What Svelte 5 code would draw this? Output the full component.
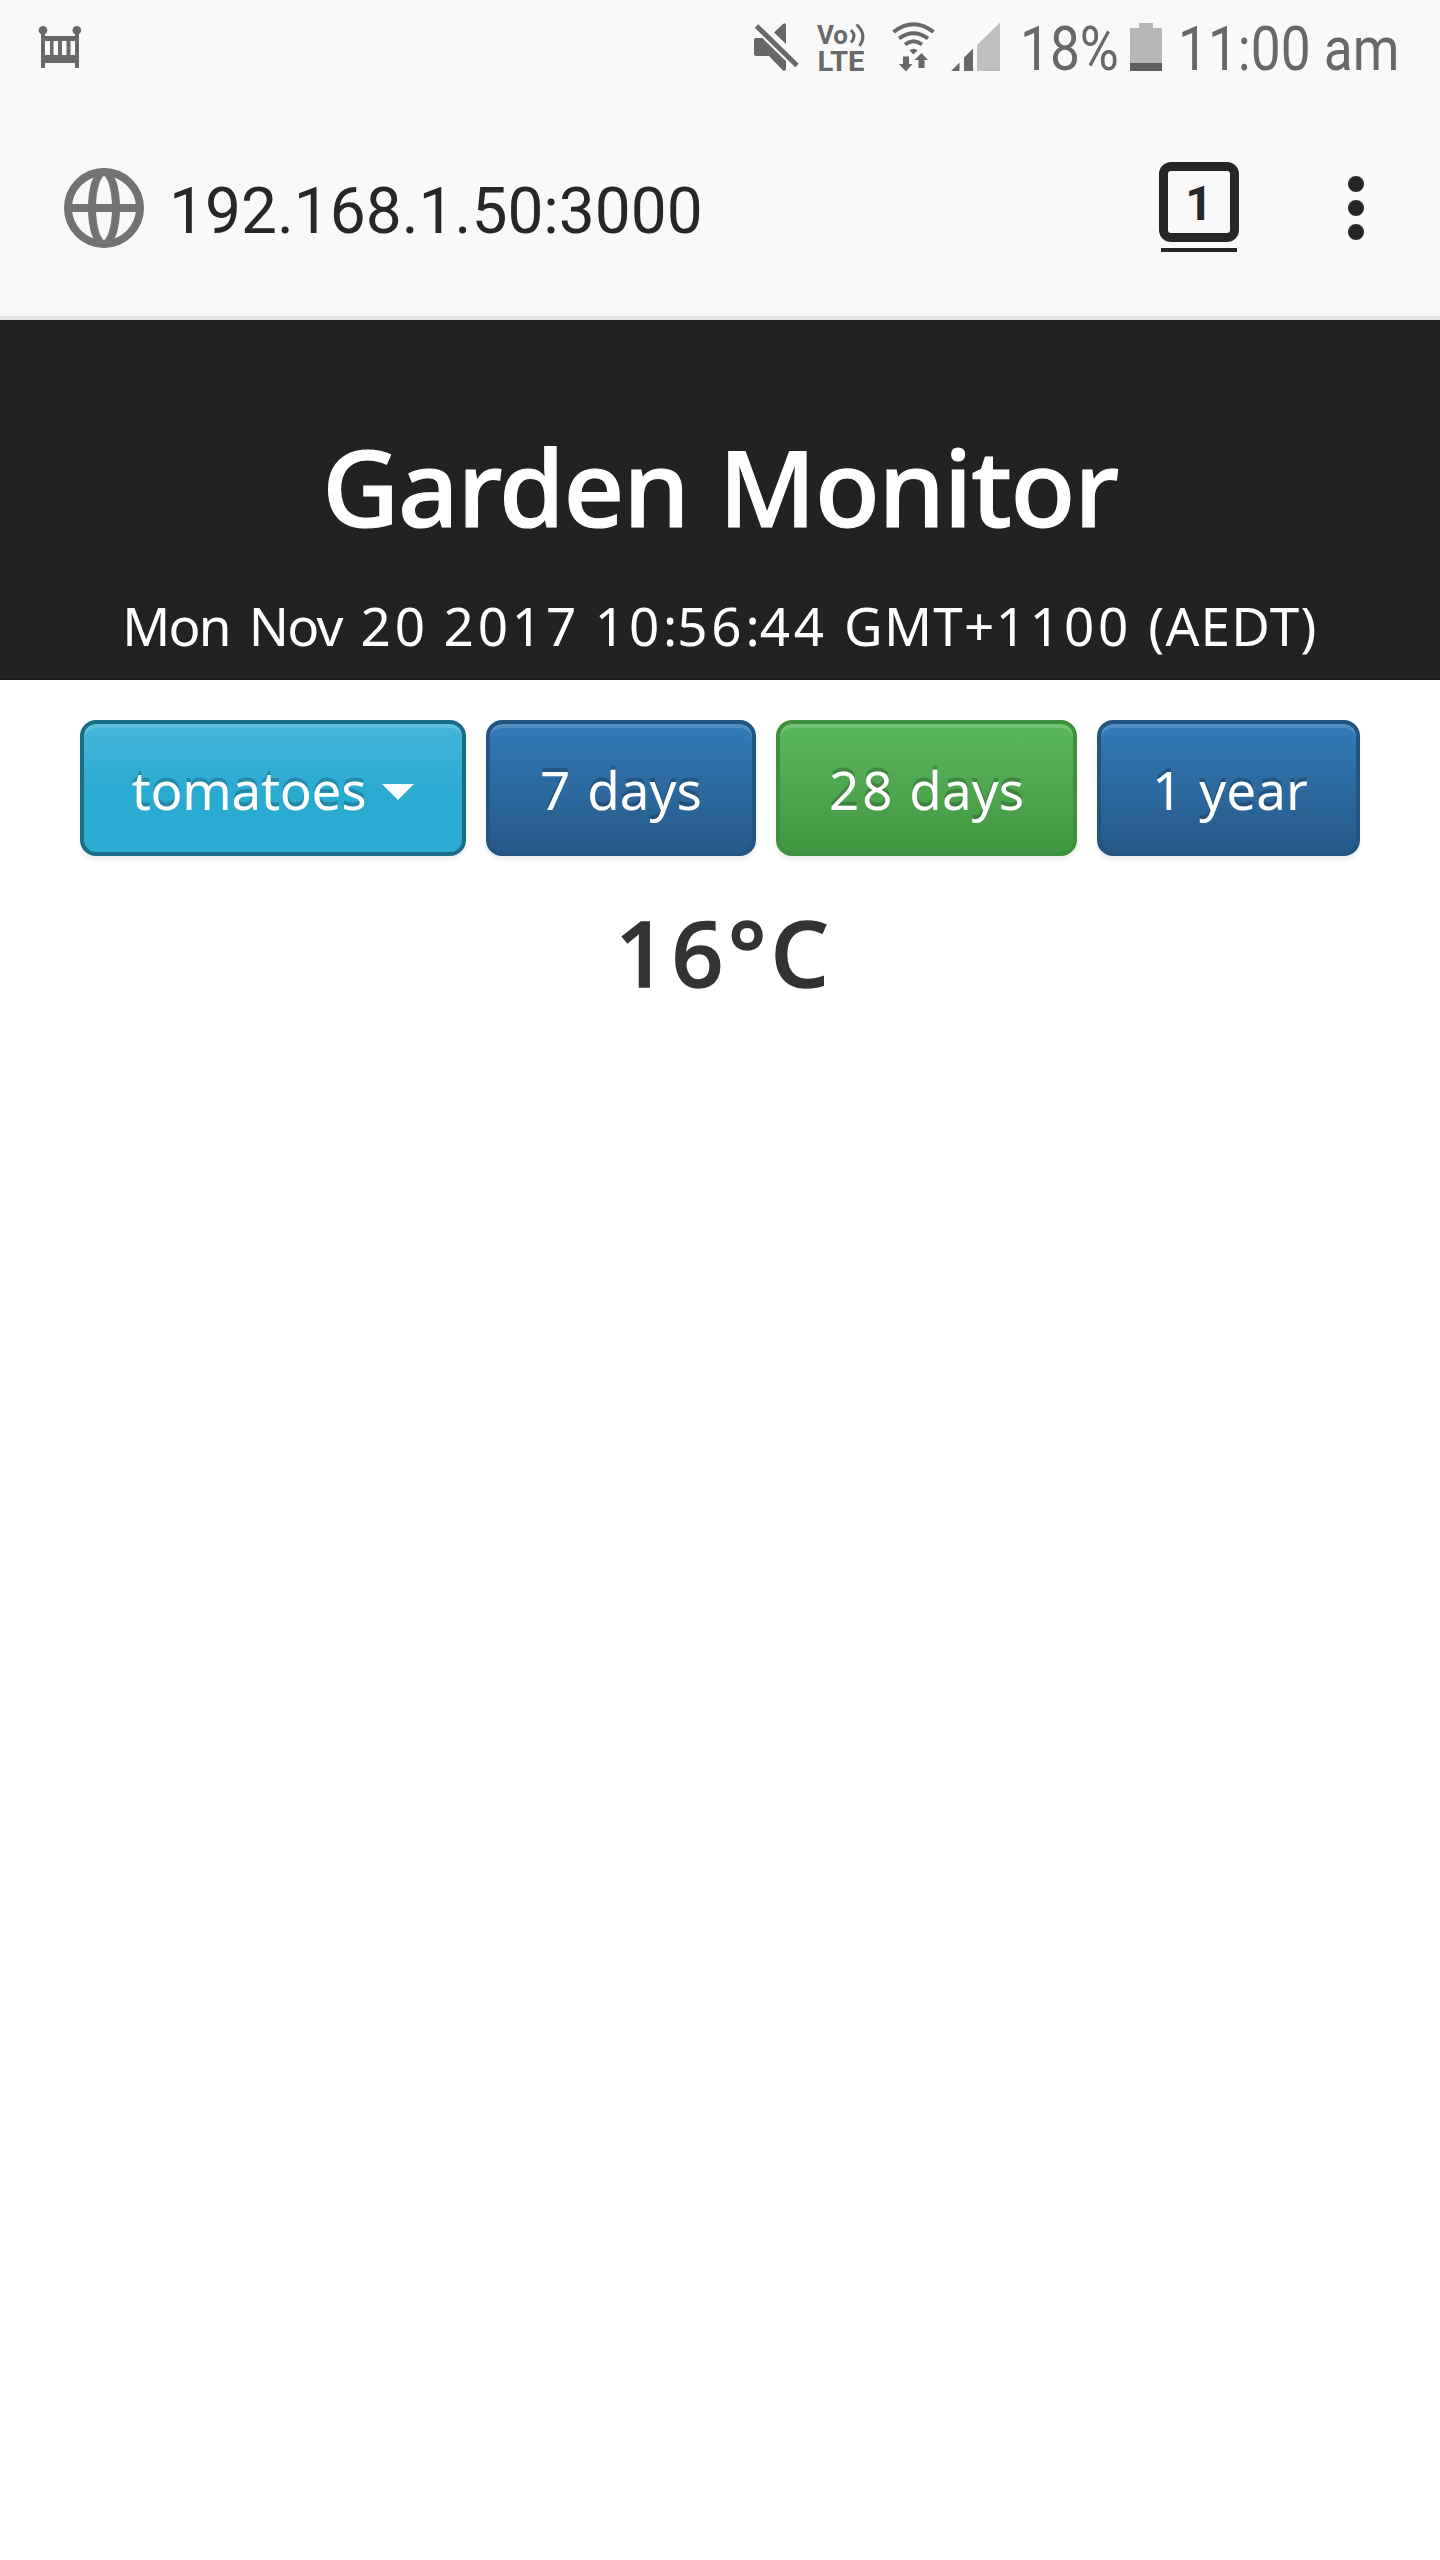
<script>
  const ranges = [
    { count: '7', unit: 'days', kind: 'primary', width: 270 },
    { count: '28', unit: 'days', kind: 'success', width: 301 },
    { count: '1', unit: 'year', kind: 'primary', width: 263 },
  ];
  // Digits, words and capitals are tracked differently in the date line.
  const date = 'Mon Nov 20 2017 10:56:44 GMT+1100 (AEDT)';
  const kindOf = (s) => (/\d/.test(s) ? 'num' : /[a-z]/.test(s) ? 'word' : /[A-Z]/.test(s) ? 'caps' : 'plain');
  const parts = date.split(/(\d+)/).map((text) => ({ text, kind: kindOf(text) }));
</script>

<div class="screen">
  <div class="status">
    <svg class="crib" viewBox="38 0 44 96" width="44" height="96">
      <circle cx="43" cy="30.3" r="4.3" /><circle cx="76.8" cy="30.3" r="4.3" />
      <path fill-rule="evenodd" d="M41 30h4v6h30v-6h4v38h-4v-5H45v5h-4zM45 41v14h5V41zM53.5 41v14h4.5V41zM62 41v14h4.500V41zM70.500 41v14h4.500V41z" />
    </svg>
    <svg class="mute" viewBox="752 0 48 96" width="48" height="96">
      <path d="M756 38h12l18 17v13.500q0 3-3 2L769 56h-13q-2 0-2-2V40q0-2 2-2zM774 32.500l9-8.500q3-2 3 1.500V44z" />
      <path d="M756.500 26 797 65.500" fill="none" stroke="#f9f9f9" stroke-width="9" />
      <path d="M756.500 26 797 65.500" fill="none" stroke="#686868" stroke-width="5" />
    </svg>
    <svg class="volte" viewBox="816 0 50 96" width="50" height="96">
      <text x="817" y="43.500" font-size="25" textLength="31" lengthAdjust="spacingAndGlyphs">Vo</text>
      <text x="817.500" y="71" font-size="27" textLength="47" lengthAdjust="spacingAndGlyphs">LTE</text>
      <path d="M851 30q6 6 0 12.500M856.500 24.500q11 10 3 21.500" fill="none" stroke="#686868" stroke-width="3" />
    </svg>
    <svg class="wifi" viewBox="890 0 48 96" width="48" height="96">
      <g fill="none" stroke="#686868" stroke-width="4">
        <path d="M893.500 32q20-15.500 40 0M899 38.500q14.500-10.500 29 0M905 44.500q8.500-6.500 17 0" />
      </g>
      <path d="M909.500 50.500q4-3.500 8 0l-4 4zM903 56.500h6V64h3.500L906 71.500 899 64h4zM918.500 68v-8H914.500l7-7 6.500 7H924.500v8z" />
    </svg>
    <svg class="signal" viewBox="950 0 52 96" width="52" height="96">
      <path d="M951 71l8.500-8.500V71zM964 71V57.500l9-9V71z" />
      <path d="M977 71V45l23-22.500V71z" fill="#bfbfbf" />
    </svg>
    <div class="percent">18%</div>
    <svg class="battery" viewBox="1130 0 32 96" width="32" height="96">
      <path d="M1130 28h9v-5h14v5h9v35h-32z" fill="#b6b6b6" /><path d="M1130 63h32v8h-32z" fill="#5f5f5f" />
    </svg>
    <div class="clock">11:00 am</div>
  </div>

  <div class="address">
    <svg class="globe" viewBox="0 0 80 80" width="80" height="80">
      <g fill="none" stroke="#737373" stroke-width="8">
        <circle cx="40" cy="40" r="36" /><ellipse cx="40" cy="40" rx="12" ry="36" /><path d="M4 40h72" />
      </g>
    </svg>
    <span class="url">192.168.1.50:3000</span>
    <div class="tabs"><div class="count">1</div><div class="bar"></div></div>
    <div class="menu"><i></i><i></i><i></i></div>
  </div>

  <header>
    <h1>Garden Monitor</h1>
    <p>{#each parts as part}<span class={part.kind}>{part.text}</span>{/each}</p>
  </header>

  <div class="buttons">
    <button class="btn info">tomatoes<span class="caret"></span></button>
    {#each ranges as r}
      <button class="btn {r.kind}" style:width="{r.width}px"><span><span class="tally">{r.count}</span> {r.unit}</span></button>
    {/each}
  </div>
  <div class="temp">16°C</div>
</div>

<style>
  :global(body) { margin: 0; background: #fff; }
  .screen { width: 1440px; height: 2560px; overflow: hidden; background: #fff; font-family: "Noto Sans", sans-serif; }
  svg { display: block; flex: none; }
  .status { display: flex; height: 96px; padding-left: 38px; background: #f9f9f9; fill: #686868; color: #686868; font-family: Roboto, sans-serif; }
  .mute { margin-left: 670px; }
  .volte { margin-left: 16px; font-weight: 700; }
  .wifi { margin-left: 24px; }
  .signal { margin-left: 12px; }
  .percent, .clock { flex: none; font-size: 61px; line-height: 98px; white-space: nowrap; transform: scaleX(.873); transform-origin: left; }
  .percent { width: 116px; margin: 0 -6px 0 18px; }
  .clock { width: 256px; margin-left: 16px; }
  .address { box-sizing: border-box; display: flex; height: 224px; padding: 66px 0 0 64px; align-items: flex-start; background: #f9f9f9; border-bottom: 4px solid #e5e5e5; font-family: Roboto, sans-serif; color: #272727; }
  .globe { margin-top: 6px; }
  .url { width: 990px; margin-left: 25px; font-size: 64px; line-height: 99px; }
  .tabs { width: 80px; flex: none; }
  .count { box-sizing: border-box; width: 80px; height: 80px; border: 9px solid #272727; border-radius: 12px; font-size: 48px; font-weight: 700; line-height: 65px; text-align: center; }
  .bar { height: 4px; margin: 6px 2px 0; background: #272727; }
  .menu { display: flex; flex-direction: column; gap: 8px; margin: 14px 0 0 109px; }
  .menu i { width: 16px; height: 16px; border-radius: 50%; background: #272727; }
  header { box-sizing: border-box; height: 360px; padding-top: 101px; background: #222; border-bottom: 1px solid #1b171b; color: #fff; text-align: center; white-space: nowrap; }
  h1 { margin: 0; font-size: 106px; line-height: 130px; font-weight: 500; letter-spacing: -1.2px; word-spacing: 4px; -webkit-text-stroke: 1.2px currentColor; }
  p { margin: 35px 0 0; font-size: 53px; line-height: 80px; word-spacing: 1px; white-space: pre; }
  .num { letter-spacing: 3.8px; }
  .word { letter-spacing: -1.8px; word-spacing: 7px; }
  .caps { letter-spacing: 1.3px; }
  .buttons { display: flex; gap: 20px; padding: 40px 80px 0; }
  .btn { box-sizing: border-box; display: flex; align-items: center; justify-content: center; height: 136px; padding: 3px 0 0; border: 4px solid; border-radius: 16px; color: #fff; font: 400 53px/80px "Noto Sans", sans-serif; white-space: nowrap; text-shadow: 0 -4px 0 rgba(0, 0, 0, .2); box-shadow: inset 0 4px 0 rgba(255, 255, 255, .15), 0 4px 4px rgba(0, 0, 0, .075); }
  .btn:last-child { padding-left: 3px; }
  .tally { letter-spacing: 3px; }
  .info { width: 386px; border-color: #1b6d85; background: #2aabd2 linear-gradient(#5bc0de, #2aabd2) 0 -60px repeat-x; letter-spacing: -.3px; }
  .primary { border-color: #245580; background: linear-gradient(#337ab7, #265a88); }
  .success { border-color: #3e8f3e; background: linear-gradient(#5cb85c, #419641); }
  .caret { margin: 4px 0 0 16px; border: 16px solid transparent; border-top-color: #fff; border-bottom: 0; }
  .temp { margin-top: 31px; padding-left: 8px; text-align: center; font-size: 91px; line-height: 130px; font-weight: 500; letter-spacing: 4.2px; color: #333; -webkit-text-stroke: 1.6px currentColor; }
</style>
